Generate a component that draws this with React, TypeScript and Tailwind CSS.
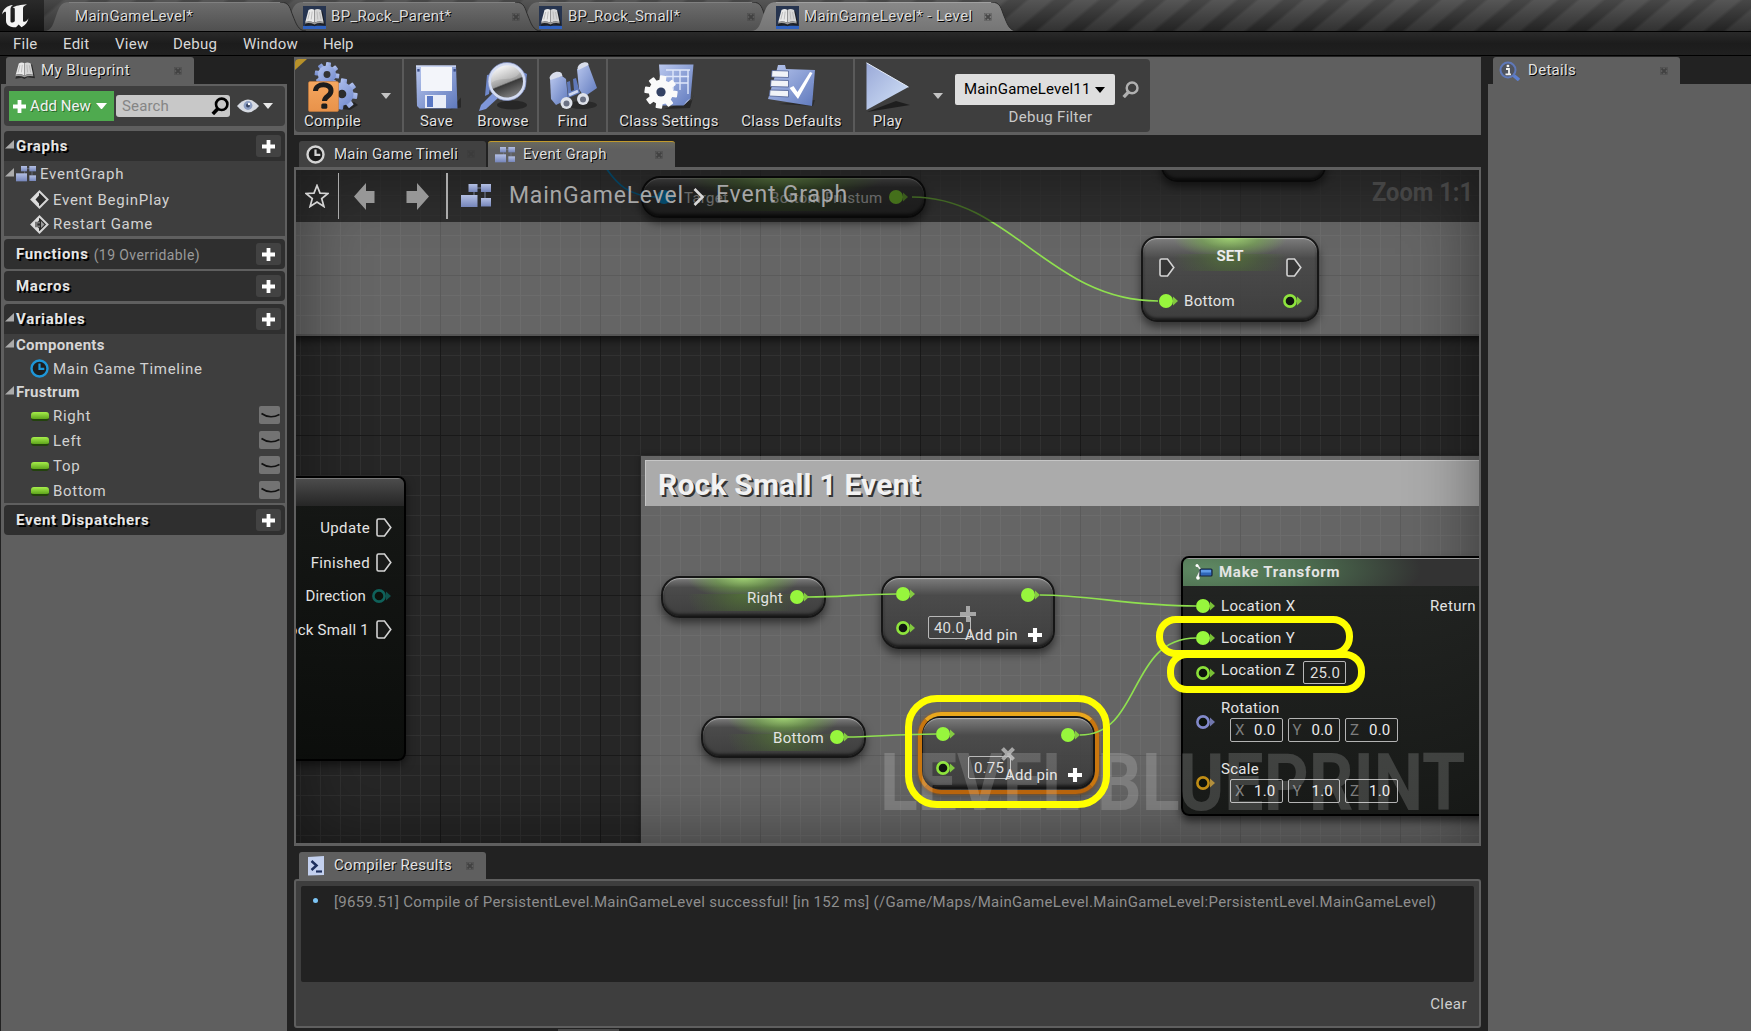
import React from 'react';

type Kids = { children?: React.ReactNode; className?: string };

const SHADOW = '[text-shadow:1px_1px_0_#000]';

/* ---------- small icons ---------- */

const Plus = ({ className = 'size-[13px]' }: { className?: string }) => (
  <svg viewBox="0 0 13 13" className={className}>
    <path d="M4.600 0h3.800v4.600H13v3.800H8.400V13H4.600V8.400H0V4.600h4.600z" fill="currentColor" />
  </svg>
);

const Down = ({ className = 'w-[10px] text-white' }: { className?: string }) => (
  <svg viewBox="0 0 10 6" className={className}>
    <path d="M0 0h10L5 6z" fill="currentColor" />
  </svg>
);

const Close = () => (
  <svg viewBox="0 0 8 8" className="size-2 shrink-0 text-[#3a3a3a] opacity-80">
    <path d="M1.500 1.500l5 5M6.500 1.500l-5 5" stroke="currentColor" strokeWidth="1.800" />
    <rect x=".4" y=".4" width="7.200" height="7.200" fill="none" stroke="currentColor" strokeWidth=".6" opacity=".6" />
  </svg>
);

const BookArt = () => (
  <g>
    <path d="M1.500 18.500L5 4l6-2 1 1 1-1 6 2 3 14-8-1-3 1.800-3-1.300z" fill="#1a1a1a" opacity=".75" />
    <path d="M1.800 14.500L5 2.600Q8 .6 11 2.400v12.800Q6 13 1.800 14.500z" fill="#e9e9e9" />
    <path d="M11 2.400Q14 .6 17.500 2.600L20 14.500Q15.500 13 11 15.200z" fill="#d6d6d6" />
    <path d="M1.800 14.500Q6 13 11 15.200 15.500 13 20 14.500l.3 1.600Q15.500 14.800 11 17 6 14.800 1.500 16.100z" fill="#9c9c9c" />
    <path d="M11 2.400v12.800" stroke="#8f8f8f" strokeWidth=".8" />
    <path d="M6.200 4.500l-1.900 7.500M8.700 4l-1 8M13.500 4l.8 8M16 4.500l1.500 7.500" stroke="#b3b3b3" strokeWidth=".8" />
  </g>
);

const BlueBook = () => (
  <svg viewBox="0 0 23 23" className="size-[23px] shrink-0">
    <rect width="23" height="23" fill="#26344f" />
    <rect y="20" width="23" height="3" fill="#2f62c0" />
    <g transform="translate(.5 1.500)"><BookArt /></g>
  </svg>
);

const Book = () => (
  <svg viewBox="0 0 22 20" className="w-[21px] shrink-0"><BookArt /></svg>
);

const GridIcon = ({ className }: { className: string }) => (
  <svg viewBox="0 0 30 24" className={className}>
    <defs>
      <linearGradient id="gi" x1="0" y1="0" x2="0" y2="1">
        <stop offset="0" stopColor="#b4c0e4" />
        <stop offset="1" stopColor="#7585ba" />
      </linearGradient>
    </defs>
    <path d="M13 8v4M24 8v6M15 4h6" stroke="#77809a" strokeWidth="1" />
    <rect x="7.500" y="0" width="9" height="8" fill="url(#gi)" />
    <rect x="20" y="0" width="10" height="8" fill="url(#gi)" />
    <rect x="0" y="11" width="16.500" height="12" fill="url(#gi)" />
    <rect x="20" y="14" width="10" height="8.500" fill="url(#gi)" />
  </svg>
);

const Clock = ({ className }: { className: string }) => (
  <svg viewBox="0 0 19 19" className={className}>
    <circle cx="9.500" cy="9.500" r="8" fill="#1d1d1d" stroke="currentColor" strokeWidth="2.400" />
    <path d="M9.500 4.500v5.300h4.800" fill="none" stroke="currentColor" strokeWidth="2.200" />
  </svg>
);

const Magnifier = ({ className }: { className: string }) => (
  <svg viewBox="0 0 18 18" className={className}>
    <circle cx="10.700" cy="7.300" r="5.700" fill="none" stroke="currentColor" strokeWidth="2.600" />
    <path d="M7 11.500L1.800 17" stroke="currentColor" strokeWidth="3.600" />
  </svg>
);

const Diamond = ({ custom }: { custom?: boolean }) => (
  <svg viewBox="0 0 19 19" className="size-[19px]">
    <path d="M9.500 1.500l8 8-8 8-8-8z" fill="#2b2b2b" stroke="#d6d6d6" strokeWidth="2" />
    <path d="M9 1.500v4L5.500 9.500 9 13.500v4l-7.500-8z" fill="#dcdcdc" />
    {custom && <path d="M5 6.800h5v1.800H7.400v1.800H10v1.800H5z" fill="#777" />}
    {custom && <path d="M11 6l3.500 3.500L11 13z" fill="#999" />}
  </svg>
);

/* ---------- toolbar icons (50x50 artboard) ---------- */

const Gear = ({ cx, cy, r, fill, hole }: { cx: number; cy: number; r: number; fill: string; hole: string }) => (
  <g transform={`translate(${cx} ${cy})`}>
    {[0, 45, 90, 135].map((a) => (
      <rect key={a} x={-r * 0.2} y={-r} width={r * 0.4} height={r * 2} rx={r * 0.06} fill={fill} transform={`rotate(${a + 8})`} />
    ))}
    <circle r={r * 0.74} fill={fill} />
    <circle r={r * 0.28} fill={hole} />
  </g>
);

const Art = ({ children }: Kids) => (
  <svg viewBox="0 0 50 50" className="size-[50px]">
    <defs>
      <linearGradient id="blue" x1="0" y1="0" x2="1" y2="1">
        <stop offset="0" stopColor="#b9c7ee" />
        <stop offset="1" stopColor="#5f79bd" />
      </linearGradient>
      <linearGradient id="gear" x1="0" y1="0" x2="1" y2="1">
        <stop offset="0" stopColor="#b4c4f0" />
        <stop offset="1" stopColor="#7189cc" />
      </linearGradient>
      <linearGradient id="play" x1="0" y1="0" x2="1" y2="1">
        <stop offset="0" stopColor="#9aa9d8" />
        <stop offset="1" stopColor="#d4e4f8" />
      </linearGradient>
      <linearGradient id="orange" x1="0" y1="0" x2="0" y2="1">
        <stop offset="0" stopColor="#f5a75f" />
        <stop offset="1" stopColor="#e8924a" />
      </linearGradient>
      <linearGradient id="lens" x1=".3" y1="0" x2=".7" y2="1">
        <stop offset="0" stopColor="#fff" />
        <stop offset=".52" stopColor="#9c9c9c" />
        <stop offset=".56" stopColor="#3a3a3a" />
        <stop offset="1" stopColor="#8a8a8a" />
      </linearGradient>
    </defs>
    {children}
  </svg>
);

const CompileArt = () => (
  <Art>
    <path d="M26 46l20-6 4 3-8 5z" fill="#191919" opacity=".7" />
    <Gear cx={19} cy={12.5} r={12.3} fill="url(#gear)" hole="#333" />
    <Gear cx={34} cy={32} r={15.5} fill="url(#gear)" hole="#2c2c2c" />
    <rect x=".5" y="19.500" width="30" height="30" rx="1.500" fill="url(#orange)" stroke="#c67a3a" strokeWidth=".6" />
    <path d="M7.500 29c0-8 15.500-8.500 15.500-.3 0 5.600-6.500 5.300-6.500 10.300" fill="none" stroke="#1d1d1d" strokeWidth="5" />
    <rect x="13.300" y="41.500" width="6" height="5.200" rx="1.500" fill="#1d1d1d" />
  </Art>
);
const SaveArt = () => (
  <Art>
    <path d="M38 47.500l11-12v10z" fill="#1a1a1a" opacity=".6" />
    <path d="M4 3.500h40l1.500 43H7.500l-2.500-2.500z" fill="url(#blue)" />
    <path d="M4 3.500h40v1.300H4z" fill="#d5def5" />
    <rect x="9" y="5" width="31" height="24" fill="#f3f5fa" />
    <rect x="13" y="33" width="21" height="13" fill="#e9edf8" />
    <rect x="15" y="34" width="6" height="11" fill="#5a78c4" />
    <rect x="5.300" y="7" width="2.300" height="2.600" fill="#3a4d88" /><rect x="41.500" y="7" width="2.300" height="2.600" fill="#3a4d88" />
  </Art>
);
const BrowseArt = () => (
  <Art>
    <ellipse cx="34" cy="43" rx="15" ry="4.500" fill="#191919" opacity=".6" />
    <path d="M9 13l5-1-3 20-4 2z" fill="#6f88cb" /><path d="M43 9l6 3-2 16-4-3z" fill="#6f88cb" />
    <path d="M15 31l5 5-12 11-7 2 2-6z" fill="#7f97da" />
    <circle cx="29" cy="19.500" r="17.500" fill="url(#lens)" stroke="#d4dcf2" strokeWidth="3" />
    <circle cx="29" cy="19.500" r="19" fill="none" stroke="#7c8cc0" strokeWidth=".7" />
    <path d="M13 21C25 13 35 22 43 9 39 1 20 0 14 12z" fill="#fff" opacity=".2" />
  </Art>
);
const FindArt = () => (
  <Art>
    <ellipse cx="34" cy="43" rx="15" ry="4" fill="#191919" opacity=".55" />
    <path d="M2 17l12-3 4 3 2 20-12 6-5-6z" fill="url(#blue)" />
    <path d="M29 7L40 2l9 24-13 9-5-8z" fill="url(#blue)" />
    <path d="M19 20l3-1 1 10 3-1-1-11 3-1 4 15-12 5z" fill="#5f78b8" />
    <path d="M1.500 16c1-5 8-8 12-5l1 3-12 4zM29.500 6c1-5 8-7 10.500-5l.5 2-10 5z" fill="#d9deec" />
    <circle cx="18.500" cy="41" r="6" fill="#dfe2ea" /><circle cx="18.500" cy="41.500" r="3" fill="#6c7284" />
    <circle cx="35" cy="37" r="6" fill="#dfe2ea" /><circle cx="35" cy="37.500" r="3" fill="#6c7284" />
    <path d="M21 33l9-4" stroke="#cfd8f0" strokeWidth="3" />
  </Art>
);
const SettingsArt = () => (
  <Art>
    <path d="M20 47l28-9 2-6-4 14z" fill="#191919" opacity=".6" />
    <path d="M15 2.500h34.500l-3 34-7 7H18z" fill="url(#blue)" />
    <path d="M46.500 36.500Q43 38 39.500 43.500z" fill="#cdd8f3" />
    <path d="M22 8h24M22 14.500h23M22 21h22M29 8v20M36 8v20M44 8v24" stroke="#dfe7fa" strokeWidth="1.400" />
    <Gear cx={17} cy={30} r={16.5} fill="#fafafa" hole="#334163" />
  </Art>
);
const DefaultsArt = () => (
  <Art>
    <path d="M12 42l34 2 2-6z" fill="#191919" opacity=".5" />
    <path d="M10 7l1-4h7l1 4 29 1-3 36L1 37z" fill="url(#blue)" />
    <path d="M5 8.500l16.500.5v6.500L4.500 15zM4 18l17.500.5v6.500L3.500 24.500zM3 28l18.500.5v6.500L2.500 34z" fill="#f1f3f8" stroke="#4e5f94" strokeWidth=".8" />
    <path d="M22.500 26l4-2 4 6L43 10l2.500 1L31 37z" fill="#fff" />
  </Art>
);
const PlayArt = () => (
  <Art>
    <path d="M4 50l43-7-14-4z" fill="#191919" opacity=".85" />
    <path d="M3.500.8L45.500 25 3.500 48z" fill="url(#play)" />
    <path d="M3.500.8L45.500 25" stroke="#e6eefb" strokeWidth="1" />
  </Art>
);

/* ---------- top ---------- */

const WindowTab = ({ label, className, active, icon = true, close = true, text = '', end = '' }: { label: string; className: string; active?: boolean; icon?: boolean; close?: boolean; text?: string; end?: string }) => (
  <div className={`relative mt-[2px] flex h-[29px] shrink-0 ${className}`}>
    <svg viewBox="0 0 26 29" className="h-[29px] w-[26px] shrink-0">
      <defs>
        <linearGradient id={active ? 'ta' : 'tb'} x1="0" y1="0" x2="0" y2="1">
          <stop offset="0" stopColor={active ? '#888' : '#6c6c6c'} /><stop offset="1" stopColor={active ? '#757575' : '#505050'} />
        </linearGradient>
      </defs>
      <path d="M0 29C8 29 9 22 12 14S16 0 26 0v29z" fill={active ? 'url(#ta)' : 'url(#tb)'} />
    </svg>
    <div className={`-mx-px flex min-w-0 flex-1 items-center border-t ${active ? 'border-[#a0a0a0] bg-linear-to-b from-[#888] to-[#757575]' : 'border-[#808080] bg-linear-to-b from-[#6c6c6c] to-[#505050]'}`}>
      {icon && <BlueBook />}
      <span className={`whitespace-nowrap pb-[2px] text-[15px] text-[#dcdcdc] ${text} ${SHADOW}`}>{label}</span>
      <span className="flex-1" />
      {close && <span className={end}><Close /></span>}
    </div>
    <svg viewBox="0 0 26 29" className="h-[29px] w-[26px] shrink-0">
      <path d="M0 0C10 0 10 7 13 14S18 29 26 29H0z" fill={active ? 'url(#ta)' : 'url(#tb)'} />
      <path d="M0 0C10 0 10 7 13 14S18 29 26 29" fill="none" stroke="#2c2c2c" strokeWidth="1" />
    </svg>
  </div>
);

const TitleBar = () => (
  <div className="flex h-[31px] shrink-0 overflow-hidden bg-[linear-gradient(to_bottom,rgba(80,80,80,.6),rgba(20,20,20,.6)),repeating-linear-gradient(140deg,#3a3a3a_0_10px,#5e5e5e_13px_26px,#3a3a3a_29.500px)]">
    <div className="h-full w-[44px] shrink-0 bg-linear-to-b from-[#2a2a2a] to-[#151515]">
      <svg viewBox="0 0 44 31" className="h-[31px] w-[44px]">
        <path d="M2 14.500C3 9 7 5.500 13 5c-2 1.500-2.500 2.500-2.500 4.500v11.500c0 1 .5 1.600 1.500 1.600s2-.6 2.800-1.400V9.500c0-1.500-.6-1.800-2.300-1.600C15 5.500 21 5 27 4.300 24 6 23 6.800 23 8.500v12c0 1 .5 1.400 1.700 1.200 1.700-.4 2.700-1.700 3.800-3.500-.8 4-3 7-7 9l-2.800-2.700-2.700 2.800C11 27.500 6 25.500 6 21V13c0-1-.4-1.500-1.200-1.200-.7.300-2 1.300-2.800 2.700z" fill="#f4f4f4" />
      </svg>
    </div>
    <WindowTab label="MainGameLevel*" className="z-40 w-[262px]" icon={false} close={false} text="ml-[6px] tracking-[0.300px]" />
    <WindowTab label="BP_Rock_Parent*" className="z-30 -ml-[28px] w-[263px]" text="ml-[5px] tracking-[0.300px]" end="-mr-[4px]" />
    <WindowTab label="BP_Rock_Small*" className="z-20 -ml-[27px] w-[264px]" text="ml-[6px] tracking-[0.180px]" end="-mr-[2px]" />
    <WindowTab label="MainGameLevel* - Level" className="z-50 -ml-[27px] w-[266px]" active text="ml-[5px] tracking-[0.380px]" />
  </div>
);

const MenuBar = () => (
  <div className="flex h-[25px] shrink-0 items-center border-y border-black bg-linear-to-b from-[#2a2a2a] via-[#1c1c1c] to-[#202020] pl-[13px] pt-[1px] text-[15px] tracking-[0.250px] text-[#d8d8d8]">
    <span className="w-[50px]">File</span>
    <span className="w-[52px]">Edit</span>
    <span className="w-[58px]">View</span>
    <span className="w-[70px]">Debug</span>
    <span className="w-[80px]">Window</span>
    <span className="tracking-[-0.100px]">Help</span>
  </div>
);

/* ---------- left panel ---------- */

const Tri = () => (
  <svg viewBox="0 0 9 9" className="mb-[3px] ml-[1px] size-[9px] shrink-0"><path d="M9 0v8.500H0z" fill="#ababab" /></svg>
);

const Header = ({ title, open, extra, className = '' }: { title: string; open?: boolean; extra?: string; className?: string }) => (
  <div className={`flex h-[30px] shrink-0 items-center bg-[#2f2f2f] pr-[4px] ${open ? 'rounded-t' : 'rounded'} ${className}`}>
    <span className="flex w-[12px] shrink-0">{open && <Tri />}</span>
    <span className="pt-px text-[15px] font-bold tracking-[0.700px] text-[#e6e6e6] [text-shadow:2px_2px_0_#000]">{title}</span>
    {extra && <span className="ml-[5px] pt-[3px] text-[14px] tracking-[0.420px] text-[#9a9a9a]">{extra}</span>}
    <span className="flex-1" />
    <span className="flex h-[22px] w-[25px] items-center justify-center rounded-[3px] bg-[#424242] text-white"><Plus className="size-[13px]" /></span>
  </div>
);

const Category = ({ title, className = '' }: { title: string; className?: string }) => (
  <div className={`flex items-center ${className}`}>
    <span className="flex w-[12px] shrink-0"><Tri /></span>
    <span className="text-[15px] font-bold tracking-[0.280px] text-[#d6d6d6]">{title}</span>
  </div>
);

const Item = ({ icon, label, eye, className = 'h-[25px]' }: { icon: React.ReactNode; label: string; eye?: boolean; className?: string }) => (
  <div className={`flex items-center pl-[26px] pr-[5px] ${className}`}>
    <span className="mr-[4px] flex w-[19px] justify-center">{icon}</span>
    <span className="flex-1 pt-px text-[15px] tracking-[0.700px] text-[#d2d2d2]">{label}</span>
    {eye && (
      <svg viewBox="0 0 21 18" className="mb-px h-[18px] w-[21px]">
        <rect width="21" height="18" rx="2" fill="#737373" />
        <path d="M2.500 7.500Q11 13.500 20.500 8.500" fill="none" stroke="#111" strokeWidth="1.600" />
      </svg>
    )}
  </div>
);

const Pill = () => (
  <span className="mt-[1px] h-[9px] w-[18px] rounded-[3px] border-b-2 border-[#23420d] bg-linear-to-b from-[#a6ef4a] to-[#5fa51c]" />
);

const Panel = () => (
  <aside className="ml-[1px] flex w-[286px] shrink-0 flex-col">
    <div className="ml-[5px] mt-px flex h-[27px] w-[188px] items-center rounded-t-[3px] bg-[#5f5f5f] pl-[8px] pr-[12px]">
      <Book />
      <span className={`ml-[6px] flex-1 text-[15px] tracking-[0.460px] text-[#e2e2e2] ${SHADOW}`}>My Blueprint</span>
      <Close />
    </div>
    <div className="flex flex-1 flex-col bg-[#5f5f5f] px-[3px] pr-[2px] pt-[2px]">
      <div className="flex h-[40px] items-center rounded bg-[#3e3e3e] pl-[5px]">
        <div className="flex h-[30px] w-[105px] items-center bg-[#4faa4f] pl-[4px] text-white">
          <Plus />
          <span className="ml-[4px] w-[66px] pt-px text-[15px] tracking-[0.090px] text-[#f2f2f2] [text-shadow:1px_1px_0_#2a6a2a]">Add New</span>
          <Down className="w-[11px] text-white" />
        </div>
        <div className="ml-[2px] flex h-[22px] w-[114px] items-center rounded-[3px] bg-[#c8c8c8] pl-[6px] pr-px">
          <span className="flex-1 text-[15px] tracking-[0.150px] text-[#858585]">Search</span>
          <Magnifier className="size-[18px] text-black" />
        </div>
        <svg viewBox="0 0 22 14" className="ml-[7px] h-[14px] w-[22px]">
          <path d="M0 7Q11-6 22 7 11 20 0 7z" fill="#d6dae2" />
          <circle cx="11" cy="6.500" r="4.400" fill="#8b9dc2" /><circle cx="11" cy="6.500" r="2" fill="#34425f" /><circle cx="12" cy="5" r="1.200" fill="#fff" />
        </svg>
        <Down className="ml-[4px] w-[10px] text-[#e8e8e8]" />
      </div>

      <Header title="Graphs" open className="mt-[5px]" />
      <div className="h-[75px] bg-[#3e3e3e]">
        <div className="flex h-[26px] items-center">
          <span className="flex w-[12px]"><Tri /></span>
          <GridIcon className="h-[16px] w-[20px]" />
          <span className="ml-[4px] pt-px text-[15px] tracking-[0.780px] text-[#d2d2d2]">EventGraph</span>
        </div>
        <Item icon={<Diamond />} label="Event BeginPlay" />
        <Item icon={<Diamond custom />} label="Restart Game" className="h-[24px]" />
      </div>
      <Header title="Functions" extra="(19 Overridable)" className="mt-[3px]" />
      <Header title="Macros" className="mt-[2px]" />
      <Header title="Variables" open className="mt-[3px]" />
      <div className="h-[169px] bg-[#3e3e3e]">
        <Category title="Components" className="h-[22px]" />
        <Item icon={<Clock className="size-[19px] text-[#1e96d8]" />} label="Main Game Timeline" />
        <Category title="Frustrum" className="h-[22px]" />
        {['Right', 'Left', 'Top', 'Bottom'].map((v) => <Item key={v} icon={<Pill />} label={v} eye />)}
      </div>
      <Header title="Event Dispatchers" className="mt-[2px]" />
    </div>
  </aside>
);

/* ---------- toolbar ---------- */

const Tool = ({ label, art, className }: { label: string; art: React.ReactNode; className: string }) => (
  <div className={`flex shrink-0 flex-col items-center pt-[3px] ${className}`}>
    {art}
    <span className={`whitespace-nowrap text-[15px] leading-[18px] tracking-[0.280px] text-[#e2e2e2] ${SHADOW}`}>{label}</span>
  </div>
);
const Sep = () => <span className="h-full w-[2px] shrink-0 bg-[#5a5a5a]" />;

const Toolbar = () => (
  <div className="mt-px h-[78px] shrink-0 bg-[#5f5f5f] pl-px pt-[2px]">
    <div className="relative flex h-[73px] w-[855px] overflow-hidden rounded-[4px] bg-[#3e3e3e] pl-px">
      <svg viewBox="0 0 12 11" className="absolute left-0 top-0 h-[11px] w-[12px]"><path d="M0 0h12L0 11z" fill="#b8922a" /></svg>
      <Tool label="Compile" art={<CompileArt />} className="w-[73px]" />
      <div className="flex w-[33px] justify-center pt-[34px]"><Down className="h-[6px] w-[10px] text-[#c4c4c4]" /></div>
      <Sep />
      <Tool label="Save" art={<SaveArt />} className="w-[65px]" />
      <Tool label="Browse" art={<BrowseArt />} className="w-[68px]" />
      <Sep />
      <Tool label="Find" art={<FindArt />} className="w-[67px]" />
      <Sep />
      <Tool label="Class Settings" art={<SettingsArt />} className="w-[122px]" />
      <Tool label="Class Defaults" art={<DefaultsArt />} className="w-[123px]" />
      <Sep />
      <Tool label="Play" art={<PlayArt />} className="w-[65px]" />
      <div className="flex w-[35px] justify-center pt-[34px]"><Down className="h-[6px] w-[10px] text-[#c4c4c4]" /></div>
      <div className="flex flex-col items-center pt-[15px]">
        <div className="flex h-[31px] w-[160px] items-center rounded-[2px] bg-[#dedede] pl-[9px] text-[15px] tracking-[0.150px] text-black">
          MainGameLevel11<Down className="ml-[4px] w-[10px] text-black" />
        </div>
        <span className="ml-[31px] mt-[2px] self-center text-[15px] leading-[20px] tracking-[0.300px] text-[#c9c9c9]">Debug Filter</span>
      </div>
      <Magnifier className="ml-[7px] mt-[22px] size-[17px] text-[#b0b0b0]" />
    </div>
  </div>
);

/* ---------- graph ---------- */

const GREEN = 'text-[#97f63d]';

const Pin = ({ className, hollow }: { className: string; hollow?: boolean }) => (
  <svg viewBox="0 0 20 16" className={`absolute h-[16px] w-[20px] ${className}`}>
    {hollow ? <circle cx="7" cy="8" r="5.600" fill="#0c120c" stroke="currentColor" strokeWidth="2.600" opacity=".9" /> : <circle cx="7" cy="8" r="7" fill="currentColor" />}
    <path d="M14 3.500l5 4.500-5 4.500z" fill="currentColor" opacity=".75" />
  </svg>
);

const Exec = ({ className }: { className: string }) => (
  <svg viewBox="0 0 16 19" className={`absolute h-[19px] w-[16px] ${className}`}>
    <path d="M1 2.500Q1 1 2.500 1H8.500L14.800 9.500 8.500 18H2.500Q1 18 1 16.500z" fill="#222" fillOpacity=".5" stroke="#d4d4d4" strokeWidth="1.600" />
  </svg>
);

const Label = ({ children, className = '' }: Kids) => (
  <span className={`absolute whitespace-nowrap text-[15px] leading-[20px] text-[#e4e4e4] ${className}`}>{children}</span>
);

const GLASS = 'absolute border-2 border-[#161616] bg-linear-to-b from-[#808080]/90 via-[#484848]/90 via-25% to-[#3a3a3a]/90 shadow-[0_5px_9px_rgba(0,0,0,.5),inset_0_1px_1px_rgba(255,255,255,.45),inset_0_-2px_3px_rgba(0,0,0,.6)]';

const Glow = ({ className = '' }: { className?: string }) => (
  <>
    <div className={`absolute top-0 h-[16px] bg-[radial-gradient(ellipse_50%_130%_at_50%_0%,rgba(165,225,110,.8),rgba(120,185,70,.5)_50%,transparent)] ${className}`} />
    <div className={`absolute top-[16px] h-[17px] bg-[radial-gradient(ellipse_50%_220%_at_50%_0%,rgba(90,140,45,.55),rgba(75,115,45,.3)_55%,transparent)] ${className}`} />
  </>
);

const GetNode = ({ label, className, pin, text }: { label: string; className: string; pin: string; text: string }) => (
  <div className={`${GLASS} h-[42px] rounded-[19px] ${className}`}>
    <Glow className="inset-x-[24px]" />
    <Label className={`top-[10px] tracking-[0.280px] ${text}`}>{label}</Label>
    <Pin className={`top-[11px] ${pin} ${GREEN}`} />
  </div>
);

const MathNode = ({ value, times, className }: { value: string; times?: boolean; className: string }) => (
  <div className={`${GLASS} h-[73px] w-[174px] rounded-[18px] ${className}`}>
    <Pin className={`left-[13px] top-[8px] ${GREEN}`} />
    <Pin className={`left-[13px] top-[42px] ${GREEN}`} hollow />
    <Pin className={`left-[138px] top-[9px] ${GREEN}`} />
    <svg viewBox="0 0 16 16" className={`absolute left-[77px] top-[28px] size-[16px] ${times ? 'rotate-45' : ''}`}>
      <path d="M6 0h4v6h6v4h-6v6H6v-6H0V6h6z" fill="#a6a6a6" />
    </svg>
    <span className="absolute left-[45px] top-[38px] flex h-[23px] w-[43px] items-center rounded-[2px] border border-[#b8b8b8] pl-[5px] pt-px text-[15px] tracking-[0.190px] text-[#dedede]">{value}</span>
    <Label className="left-[82px] top-[47px] tracking-[0.280px]">Add pin</Label>
    <span className="absolute left-[145px] top-[50px] text-white"><Plus className="size-[14px]" /></span>
  </div>
);

const Vector = ({ value, className }: { value: string; className: string }) => (
  <div className={`absolute left-[47px] flex gap-[5px] ${className}`}>
    {['X', 'Y', 'Z'].map((a) => (
      <span key={a} className="flex h-[24px] w-[52.500px] items-center justify-between rounded-[2px] border border-[#b4b4b4] pl-[4px] pr-[6px] pt-px text-[15px] tracking-[0.200px] text-[#ececec]">
        <span className="text-[#7d7d7d]">{a}</span>{value}
      </span>
    ))}
  </div>
);

const Graph = () => (
  <div className="relative h-[679px] shrink-0 overflow-hidden border-2 border-b-[3px] border-t-[3px] border-[#5f5f5f] bg-[#262626]">
    {/* panned canvas, in window coordinates */}
    <div className="absolute -left-[296px] -top-[170px] h-[1031px] w-[1751px]">
      <div className="absolute inset-0 bg-[linear-gradient(to_right,#191919_1px,transparent_1px),linear-gradient(to_bottom,#191919_1px,transparent_1px),linear-gradient(to_right,#313131_1px,transparent_1px),linear-gradient(to_bottom,#313131_1px,transparent_1px)] bg-[length:160px_160px,160px_160px,20px_20px,20px_20px] bg-[position:120px_0,0_115px,0_0,0_15px]" />

      <div className="absolute left-[290px] top-[160px] h-[176px] w-[1195px] border-b-2 border-[#555] bg-white/29 shadow-[0_4px_8px_rgba(0,0,0,.6)]" />
      <div className="absolute left-[641px] top-[456px] h-[400px] w-[860px] bg-white/29 shadow-[0_0_6px_rgba(0,0,0,.4)]">
        <div className="absolute left-[4px] right-0 top-[4px] flex h-[46px] items-center border-l border-t border-[#c6c6c6] bg-[#ababab] pl-[12px] pt-px text-[30px] font-bold tracking-[0.200px] text-[#f2f2f2] [text-shadow:2px_2px_0_#333]">
          Rock Small 1 Event
        </div>
      </div>

      <div className="pointer-events-none absolute left-[296px] top-[170px] h-[673px] w-[1183px] shadow-[inset_0_0_70px_rgba(0,0,0,.45)]" />

      {/* nodes */}
      <div className={`${GLASS} left-[1161px] top-[110px] h-[72px] w-[165px] rounded-[16px]`} />
      <div className={`${GLASS} left-[641px] top-[176px] h-[42px] w-[285px] rounded-[19px]`}>
        <Glow className="inset-x-[40px]" />
        <Pin className="left-[14px] top-[11px] text-[#0d9fe8]" />
        <Label className="left-[41px] top-[10px] tracking-[0.280px]">Target</Label>
        <Label className="left-[127px] top-[10px] tracking-[0.280px]">Bottom Frustum</Label>
        <Pin className={`left-[246px] top-[11px] ${GREEN}`} />
      </div>

      <div className={`${GLASS} left-[1141px] top-[236px] h-[86px] w-[178px] rounded-[16px]`}>
        <Glow className="inset-x-[30px]" />
        <span className="absolute inset-x-0 top-[8px] text-center text-[15px] font-bold leading-[20px] text-[#ececec]">SET</span>
        <Exec className="left-[16px] top-[20px]" />
        <Exec className="left-[143px] top-[20px]" />
        <Pin className={`left-[16px] top-[55px] ${GREEN}`} />
        <Label className="left-[41px] top-[53px] tracking-[0.280px]">Bottom</Label>
        <Pin className={`left-[140px] top-[55px] ${GREEN}`} hollow />
      </div>

      <div className="absolute left-[200px] top-[476px] h-[285px] w-[206px] overflow-hidden rounded-[8px] border-2 border-black bg-linear-to-b from-[#151715]/95 to-[#0b0d0b]/97 shadow-[0_4px_8px_rgba(0,0,0,.5)]">
        <div className="h-[28px] border-t border-[#777] bg-linear-to-b from-[#4c4c4c] to-[#262626]" />
        <Label className="right-[34px] top-[40px] tracking-[0.350px]">Update</Label>
        <Exec className="left-[174px] top-[40px]" />
        <Label className="right-[34px] top-[75px] tracking-[0.380px]">Finished</Label>
        <Exec className="left-[174px] top-[75px]" />
        <Label className="right-[38px] top-[108px] tracking-[0.100px]">Direction</Label>
        <Pin className="left-[170px] top-[110px] text-[#0f6a62]" hollow />
        <Label className="right-[35px] top-[142px] tracking-[0.250px]">Rock Small 1</Label>
        <Exec className="left-[174px] top-[142px]" />
      </div>

      <GetNode label="Right" className="left-[661px] top-[576px] w-[165px]" text="left-[84px]" pin="left-[127px]" />
      <GetNode label="Bottom" className="left-[701px] top-[716px] w-[165px]" text="left-[70px]" pin="left-[127px]" />
      <MathNode value="40.0" className="left-[881px] top-[576px]" />
      <MathNode value="0.75" times className="left-[921px] top-[716px]" />
      <div className="absolute left-[918px] top-[712px] h-[82px] w-[181px] rounded-[23px] border-[4px] border-b-[#b8640c] border-l-[#c9760e] border-r-[#c9760e] border-t-[#eaa71c] shadow-[0_0_3px_#a85f10]" />

      <div className="absolute left-[1181px] top-[556px] h-[260px] w-[400px] overflow-hidden rounded-[8px] border-2 border-black bg-linear-to-b from-[#1f211f]/95 to-[#141614]/95 shadow-[0_5px_9px_rgba(0,0,0,.6)]">
        <div className="h-[28px] border-t border-[#999] bg-[radial-gradient(ellipse_230px_60px_at_20px_10px,#5f8963,#4c6d4f_45%,#333_95%)]" />
        <svg viewBox="0 0 18 18" className="absolute left-[12px] top-[5px] size-[18px]">
          <path d="M2 2l4 5-4 8" fill="none" stroke="#e8e8e8" strokeWidth="1.800" />
          <rect x="5" y="6" width="12" height="7" rx="1" fill="#2f66b8" stroke="#16233c" strokeWidth="1.200" />
          <rect x="6" y="7" width="10" height="2.500" fill="#5f9be8" />
          <circle cx="2" cy="2.500" r="1.500" fill="#fff" /><circle cx="3" cy="15" r="1.800" fill="#fff" />
        </svg>
        <Label className="left-[36px] top-[4px] font-bold tracking-[0.740px]">Make Transform</Label>
        <Pin className={`left-[13px] top-[40px] ${GREEN}`} />
        <Label className="left-[38px] top-[38px] tracking-[0.330px]">Location X</Label>
        <Label className="left-[247px] top-[38px] tracking-[0.350px]">Return</Label>
        <Pin className={`left-[13px] top-[72px] ${GREEN}`} />
        <Label className="left-[38px] top-[70px] tracking-[0.330px]">Location Y</Label>
        <Pin className={`left-[13px] top-[107px] ${GREEN}`} hollow />
        <Label className="left-[38px] top-[102px] tracking-[0.330px]">Location Z</Label>
        <span className="absolute left-[120px] top-[103px] flex h-[23px] w-[43px] items-center rounded-[2px] border border-[#b8b8b8] pl-[6px] pt-px text-[15px] tracking-[0.190px] text-[#dedede]">25.0</span>
        <Pin className="left-[13px] top-[156px] text-[#8d95dd]" hollow />
        <Label className="left-[38px] top-[140px] tracking-[0.280px]">Rotation</Label>
        <Vector value="0.0" className="top-[160px]" />
        <Pin className="left-[13px] top-[217px] text-[#d39a15]" hollow />
        <Label className="left-[38px] top-[201px] tracking-[0.280px]">Scale</Label>
        <Vector value="1.0" className="top-[221px]" />
      </div>

      {/* wires */}
      <svg viewBox="0 0 1751 1031" className="absolute inset-0 h-[1031px] w-[1751px]" fill="none" stroke="#8fe04f" strokeWidth="1.700">
        <path d="M606 168C617 184 628 196 656 197" stroke="#0a8ccc" />
        <path d="M912 197C1010 197 1050 301 1158 301" />
        <path d="M808 597C840 597 860 594 896 594" />
        <path d="M1040 595C1090 595 1130 606 1196 606" />
        <path d="M848 737C870 737 900 734 936 734" />
        <path d="M1080 735C1142 735 1128 638 1196 638" />
      </svg>

      {/* breadcrumb strip */}
      <div className="absolute left-[296px] top-[170px] flex h-[52px] w-[1183px] items-center bg-black/55">
        <svg viewBox="0 0 24 24" className="ml-[9px] size-[24px] shrink-0"><path d="M12 1.500l3 7.600 8 .4-6.300 5.100 2.200 7.900L12 18l-6.900 4.500 2.200-7.900L1 9.500l8-.4z" fill="none" stroke="#d4d4d4" strokeWidth="1.700" /></svg>
        <span className="ml-[9px] h-[46px] w-px bg-[#aaa]" />
        <svg viewBox="0 0 21 27" className="ml-[15px] h-[27px] w-[21px] shrink-0"><path d="M0 13.500L12 0v8h8.500v12H12v7z" fill="#979797" /></svg>
        <svg viewBox="0 0 23 27" className="ml-[31px] h-[27px] w-[23px] shrink-0"><path d="M23 13.500L11 0v8H.5v12H11v7z" fill="#979797" /></svg>
        <span className="ml-[17px] h-[46px] w-[2px] bg-[#aaa]" />
        <GridIcon className="ml-[13px] h-[24px] w-[30px] shrink-0" />
        <span className="ml-[18px] w-[184px] pt-px text-[23px] tracking-[0.780px] text-[#a6a6a6]">MainGameLevel</span>
        <svg viewBox="0 0 12 18" className="mt-[1px] h-[18px] w-[12px] shrink-0"><path d="M1.500 1l8 8-8 8" fill="none" stroke="#d8d8d8" strokeWidth="2.600" /></svg>
        <span className="ml-[11px] pb-[2px] text-[23px] tracking-[0.820px] text-[#a6a6a6]">Event Graph</span>
      </div>
      <div className="absolute left-[1372px] top-[176px] origin-left scale-x-[.91] whitespace-nowrap text-[26px] font-bold leading-[32px] text-[#444]">Zoom 1:1</div>

      <div className="absolute left-[880px] top-[736px] origin-left scale-x-[.873] whitespace-nowrap text-[80px] font-bold leading-[94px] text-white/17">LEVEL BLUEPRINT</div>

      {/* highlights */}
      <div className="absolute left-[905px] top-[695px] h-[113px] w-[205px] rounded-[32px] border-[7px] border-[#ffff00]" />
      <div className="absolute left-[1156px] top-[616px] h-[41px] w-[197px] rounded-[20px] border-[7px] border-[#ffff00]" />
      <div className="absolute left-[1167px] top-[651px] h-[42px] w-[198px] rounded-[20px] border-[7px] border-[#ffff00]" />
    </div>
  </div>
);

const GraphTabs = () => (
  <div className="mt-[6px] flex h-[26px] shrink-0 gap-[2px] pl-[5px]">
    <div className="flex w-[187px] items-center rounded-t-[3px] bg-[#414141] pl-[7px] pr-[11px]">
      <Clock className="size-[19px] text-[#d4d4d4]" />
      <span className={`ml-[9px] flex-1 text-[15px] tracking-[0.200px] text-[#dedede] ${SHADOW}`}>Main Game Timeli</span>
      <Close />
    </div>
    <div className="flex w-[187px] items-center rounded-t-[3px] border-t border-[#c29a2c] bg-linear-to-b from-[#6a6a5e] to-[#5f5f5f] to-30% pl-[7px] pr-[12px]">
      <GridIcon className="h-[16px] w-[20px]" />
      <span className={`ml-[8px] flex-1 text-[15px] tracking-[0.340px] text-[#dedede] ${SHADOW}`}>Event Graph</span>
      <Close />
    </div>
  </div>
);

const Results = () => (
  <>
    <div className="ml-[5px] mt-[6px] flex h-[27px] w-[187px] shrink-0 items-center rounded-t-[3px] bg-[#5f5f5f] pl-[8px] pr-[12px]">
      <svg viewBox="0 0 18 20" className="h-[20px] w-[18px]">
        <path d="M1 1l16-1v19l-16 .5z" fill="#c3d0ee" />
        <path d="M4.500 5l5 4.500-5 4.500" fill="none" stroke="#1d2f5e" strokeWidth="2.500" /><path d="M9 15.500h6" stroke="#1d2f5e" strokeWidth="2.200" />
      </svg>
      <span className={`ml-[9px] flex-1 pb-px text-[15px] tracking-[0.280px] text-[#e2e2e2] ${SHADOW}`}>Compiler Results</span>
      <Close />
    </div>
    <div className="flex h-[149px] shrink-0 flex-col rounded-[3px] border-2 border-[#5f5f5f] bg-[#3e3e3e]">
      <div className="mx-[5px] mt-[5px] flex h-[96px] rounded-[2px] bg-[#222] pt-[6px] leading-[20px]">
        <span className="ml-[12px] mt-[6px] size-[5px] rounded-full bg-[#7cc4f4]" />
        <span className="ml-[16px] whitespace-nowrap text-[15px] tracking-[0.300px] text-[#8e8e8e]">[9659.51] Compile of PersistentLevel.MainGameLevel successful! [in 152 ms] (/Game/Maps/MainGameLevel.MainGameLevel:PersistentLevel.MainGameLevel)</span>
      </div>
      <span className="mr-[12px] mt-[12px] self-end text-[15px] leading-[20px] tracking-[0.450px] text-[#cfcfcf]">Clear</span>
    </div>
    <div className="ml-[264px] mt-px h-[2px] w-[61px] bg-[#4a4a4a]" />
  </>
);

const Details = () => (
  <aside className="ml-[7px] flex flex-1 flex-col">
    <div className="ml-[5px] mt-px flex h-[27px] w-[187px] items-center rounded-t-[3px] bg-[#5f5f5f] pl-[6px] pr-[12px]">
      <svg viewBox="0 0 22 20" className="h-[20px] w-[22px]">
        <path d="M13 13l7 6" stroke="#5d7fd0" strokeWidth="3.500" />
        <circle cx="9" cy="9" r="7.500" fill="#50545e" stroke="#5f78b8" strokeWidth="2" />
        <path d="M7 8h3v5M6.500 13.300h5.500" fill="none" stroke="#f2f2f2" strokeWidth="1.800" /><rect x="7.700" y="3.800" width="2.500" height="2.300" fill="#f2f2f2" />
      </svg>
      <span className={`ml-[7px] flex-1 text-[15px] tracking-[0.300px] text-[#e2e2e2] ${SHADOW}`}>Details</span>
      <Close />
    </div>
    <div className="flex-1 bg-[#5f5f5f]" />
  </aside>
);

export default function App() {
  return (
    <div className="flex h-[1031px] w-[1751px] flex-col overflow-hidden bg-[#222] font-['Roboto',sans-serif]">
      <TitleBar />
      <MenuBar />
      <div className="flex min-h-0 flex-1">
        <Panel />
        <main className="ml-[7px] flex w-[1187px] shrink-0 flex-col">
          <Toolbar />
          <GraphTabs />
          <Graph />
          <Results />
        </main>
        <Details />
      </div>
    </div>
  );
}
